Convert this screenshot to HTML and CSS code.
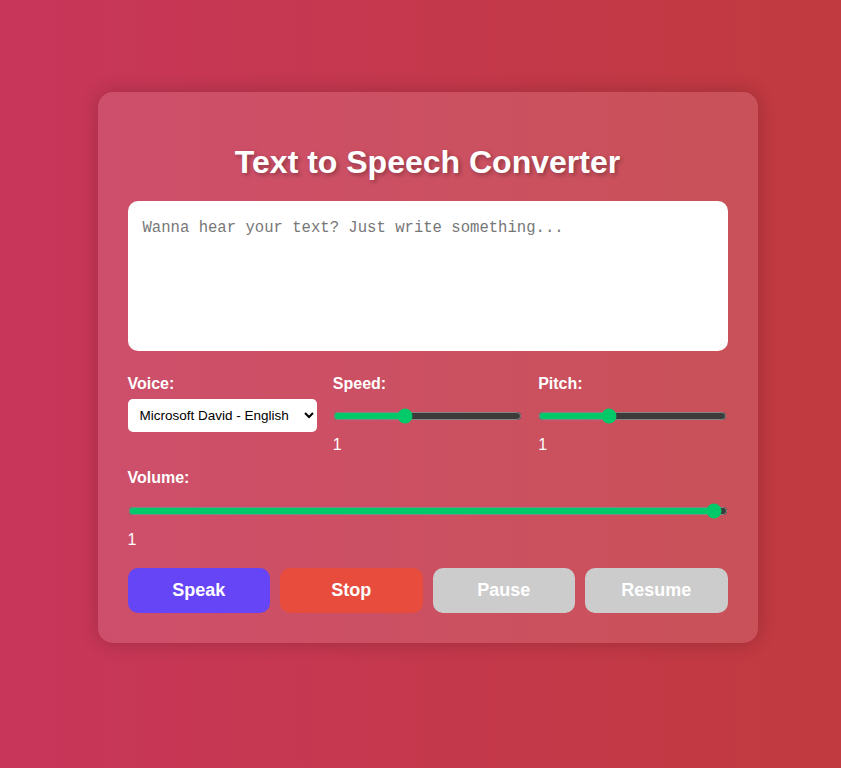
FILE: index.html
```html
<!DOCTYPE html>
<html lang="en">
<head>
<meta charset="utf-8">
<title>Text to Speech Converter</title>
<link rel="stylesheet" href="styles.css">
</head>
<body>
<div class="page">
  <div class="card">
    <h1 class="title">Text to Speech Converter</h1>
    <textarea class="text-input" placeholder="Wanna hear your text? Just write something..."></textarea>
    <div class="controls">
      <div class="control">
        <label class="label">Voice:</label>
        <select class="voice">
          <option>Microsoft David - English (United States)</option>
        </select>
      </div>
      <div class="control">
        <label class="label">Speed:</label>
        <input class="range" type="range" min="0" max="100" step="any" value="37">
        <span class="value">1</span>
      </div>
      <div class="control">
        <label class="label">Pitch:</label>
        <input class="range" type="range" min="0" max="100" step="any" value="36.5">
        <span class="value">1</span>
      </div>
    </div>
    <div class="control volume">
      <label class="label">Volume:</label>
      <input class="range" type="range" min="0" max="100" step="any" value="99">
      <span class="value">1</span>
    </div>
    <div class="buttons">
      <button class="btn btn-speak">Speak</button>
      <button class="btn btn-stop">Stop</button>
      <button class="btn btn-muted">Pause</button>
      <button class="btn btn-muted">Resume</button>
    </div>
  </div>
</div>
</body>
</html>
```
FILE: styles.css
```css
* { box-sizing: border-box; }
html, body { margin: 0; padding: 0; height: 100%; }
body {
  font-family: "Liberation Sans", Arial, sans-serif;
  background: linear-gradient(to right, #c8365a, #c13a3f);
  color: #fff;
}
.page {
  display: flex;
  justify-content: center;
  padding: 92px 0 0 14px;
}
.card {
  width: 660px;
  padding: 30px;
  background: rgba(255, 255, 255, 0.12);
  border-radius: 15px;
  box-shadow: 0 0 20px rgba(0, 0, 0, 0.2);
}
.title {
  margin: 22px 0 20px;
  text-align: center;
  font-size: 32px;
  font-weight: bold;
  line-height: 37px;
  text-shadow: 2px 2px 4px rgba(0, 0, 0, 0.3);
}
.text-input {
  display: block;
  width: 100%;
  height: 150px;
  border: none;
  border-radius: 10px;
  padding: 18px 15px 15px;
  margin: 0 0 24px;
  font-family: "Liberation Mono", monospace;
  font-size: 15.6px;
  resize: none;
  outline: none;
}
.text-input::placeholder { color: #777; }
.controls {
  display: grid;
  grid-template-columns: repeat(3, 1fr);
  gap: 16px;
}
.control { display: flex; flex-direction: column; align-items: flex-start; }
.label {
  font-weight: bold;
  font-size: 16px;
  line-height: 18px;
  margin-bottom: 6px;
}
.voice {
  width: 100%;
  height: 33px;
  padding: 0 8px;
  border: none;
  border-radius: 5px;
  font-family: "Liberation Sans", Arial, sans-serif;
  font-size: 13.5px;
  color: #000;
  background: #fff;
}
.range {
  width: 100%;
  margin: 9px 0 0;
  accent-color: #00c96a;
}
.value {
  margin-top: 12px;
  font-size: 16px;
  line-height: 18px;
}
.volume { margin-top: 15px; }
.volume .range { margin-top: 10px; }
.buttons {
  display: grid;
  grid-template-columns: repeat(4, 1fr);
  gap: 10px;
  margin-top: 19px;
}
.btn {
  height: 45px;
  border: none;
  border-radius: 10px;
  color: #fff;
  font-family: "Liberation Sans", Arial, sans-serif;
  font-size: 18px;
  font-weight: bold;
}
.btn-speak { background: #6645f6; }
.btn-stop { background: #e74c3c; }
.btn-muted { background: #cccccc; }
```
